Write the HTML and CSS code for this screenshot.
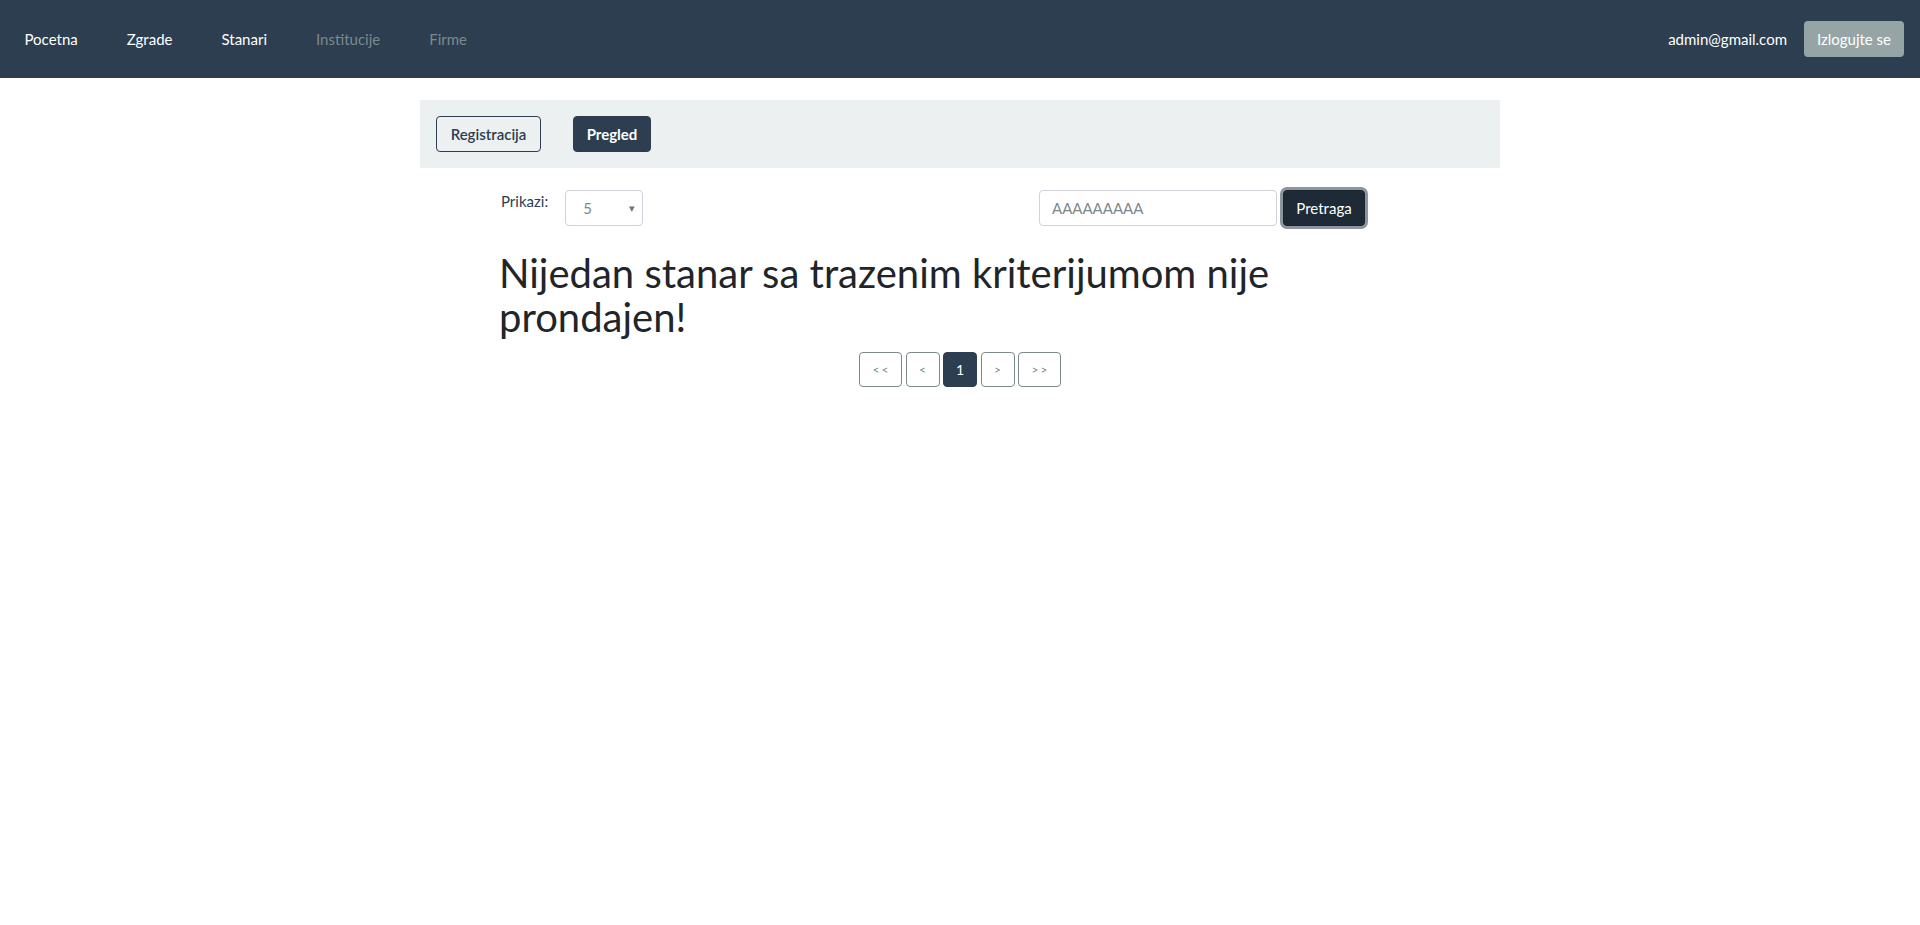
FILE: index.html
```html
<!DOCTYPE html>
<html lang="sr">
<head>
<meta charset="utf-8">
<title>Stanari</title>
<link rel="stylesheet" href="styles.css">
</head>
<body>
<nav class="navbar">
  <div class="nav-links">
    <a class="nav-link active" href="#">Pocetna</a>
    <a class="nav-link active" href="#">Zgrade</a>
    <a class="nav-link active" href="#">Stanari</a>
    <a class="nav-link muted" href="#">Institucije</a>
    <a class="nav-link muted" href="#">Firme</a>
  </div>
  <div class="nav-right">
    <span class="user">admin@gmail.com</span>
    <button class="btn-logout">Izlogujte se</button>
  </div>
</nav>

<main class="page">
  <div class="tabs">
    <button class="tab tab-outline">Registracija</button>
    <button class="tab tab-active">Pregled</button>
  </div>

  <div class="content">
    <div class="controls">
      <div class="show">
        <label class="show-label">Prikazi:</label>
        <div class="select">
          <span class="select-value">5</span>
          <span class="select-arrow">&#9662;</span>
        </div>
      </div>
      <div class="search">
        <input class="search-input" type="text" placeholder="AAAAAAAAA">
        <button class="search-btn">Pretraga</button>
      </div>
    </div>
    <h2 class="empty">Nijedan stanar sa trazenim kriterijumom nije prondajen!</h2>
  </div>

  <div class="pagination">
    <button class="page-btn wide">&lt;&lt;</button>
    <button class="page-btn">&lt;</button>
    <button class="page-btn current">1</button>
    <button class="page-btn">&gt;</button>
    <button class="page-btn wide">&gt;&gt;</button>
  </div>
</main>
</body>
</html>
```

FILE: styles.css
```css
* { box-sizing: border-box; }

html, body {
  margin: 0;
  padding: 0;
}

body {
  font-family: Lato, "Open Sans", "Liberation Sans", sans-serif;
  font-size: 15px;
  color: #212529;
  background: #fff;
}

button, input {
  font-family: inherit;
}

.navbar {
  height: 78px;
  background: #2c3e50;
  display: flex;
  align-items: center;
  justify-content: space-between;
  padding: 0 16px 0 0;
}

.nav-links {
  display: flex;
  align-items: center;
}

.nav-link {
  padding: 0 24.5px;
  font-size: 15px;
  text-decoration: none;
}

.nav-link.active { color: #ffffff; }
.nav-link.muted { color: #7b8a8b; }

.nav-right {
  display: flex;
  align-items: center;
  gap: 17px;
}

.user {
  color: #ffffff;
  font-size: 15px;
}

.btn-logout {
  width: 100px;
  height: 36px;
  border: none;
  border-radius: 4px;
  background: #95a5a6;
  color: #ffffff;
  font-size: 15px;
  padding: 0;
}

.page {
  width: 1080px;
  margin: 22px auto 0;
}

.tabs {
  height: 68px;
  background: #ecf0f1;
  display: flex;
  align-items: center;
  gap: 32px;
  padding-left: 16px;
}

.tab {
  height: 36px;
  border-radius: 4px;
  font-size: 15px;
  padding: 0;
}

.tab-outline {
  width: 105px;
  background: transparent;
  border: 1px solid #2c3e50;
  color: #2c3e50;
  font-weight: 600;
}

.tab-active {
  width: 78px;
  background: #2c3e50;
  border: 1px solid #2c3e50;
  color: #ffffff;
  font-weight: 700;
}

.content {
  margin-left: 79px;
  width: 871px;
  padding-top: 22px;
}

.controls {
  display: flex;
  justify-content: space-between;
  align-items: flex-start;
}

.show {
  display: flex;
  align-items: flex-start;
  gap: 17px;
  padding-left: 2px;
}

.show-label {
  font-size: 15px;
  color: #2c3e50;
  line-height: 18px;
  padding-top: 2px;
}

.select {
  width: 78px;
  height: 36px;
  border: 1px solid #ced4da;
  border-radius: 4px;
  display: flex;
  align-items: center;
  justify-content: space-between;
  padding: 0 7px 0 17px;
}

.select-value {
  color: #7b8a8b;
  font-size: 15px;
}

.select-arrow {
  color: #6c757d;
  font-size: 11px;
}

.search {
  display: flex;
  align-items: center;
  gap: 6px;
  margin-right: 5px;
}

.search-input {
  width: 238px;
  height: 36px;
  border: 1px solid #ced4da;
  border-radius: 4px;
  padding: 0 12px;
  font-size: 15px;
  color: #212529;
  outline: none;
}

.search-input::placeholder {
  color: #7b8a8b;
}

.search-btn {
  width: 82px;
  height: 36px;
  border: 1px solid #1a252f;
  border-radius: 4px;
  background: #1e2b37;
  color: #ffffff;
  font-size: 15px;
  padding: 0;
  box-shadow: 0 0 0 3px #8c969e;
}

.empty {
  margin: 25px 0 13px;
  font-size: 40px;
  font-weight: 400;
  line-height: 1.1;
  color: #212529;
}

.pagination {
  display: flex;
  justify-content: center;
  gap: 3.5px;
}

.page-btn {
  width: 34px;
  height: 35px;
  border: 1px solid #7b8a8b;
  border-radius: 4px;
  background: #ffffff;
  color: #7b8a8b;
  font-size: 12px;
  padding: 0;
}

.page-btn.wide {
  width: 43px;
  letter-spacing: 2px;
  text-indent: 2px;
}

.page-btn.current {
  background: #2c3e50;
  border-color: #2c3e50;
  color: #ffffff;
  font-size: 14px;
}
```
